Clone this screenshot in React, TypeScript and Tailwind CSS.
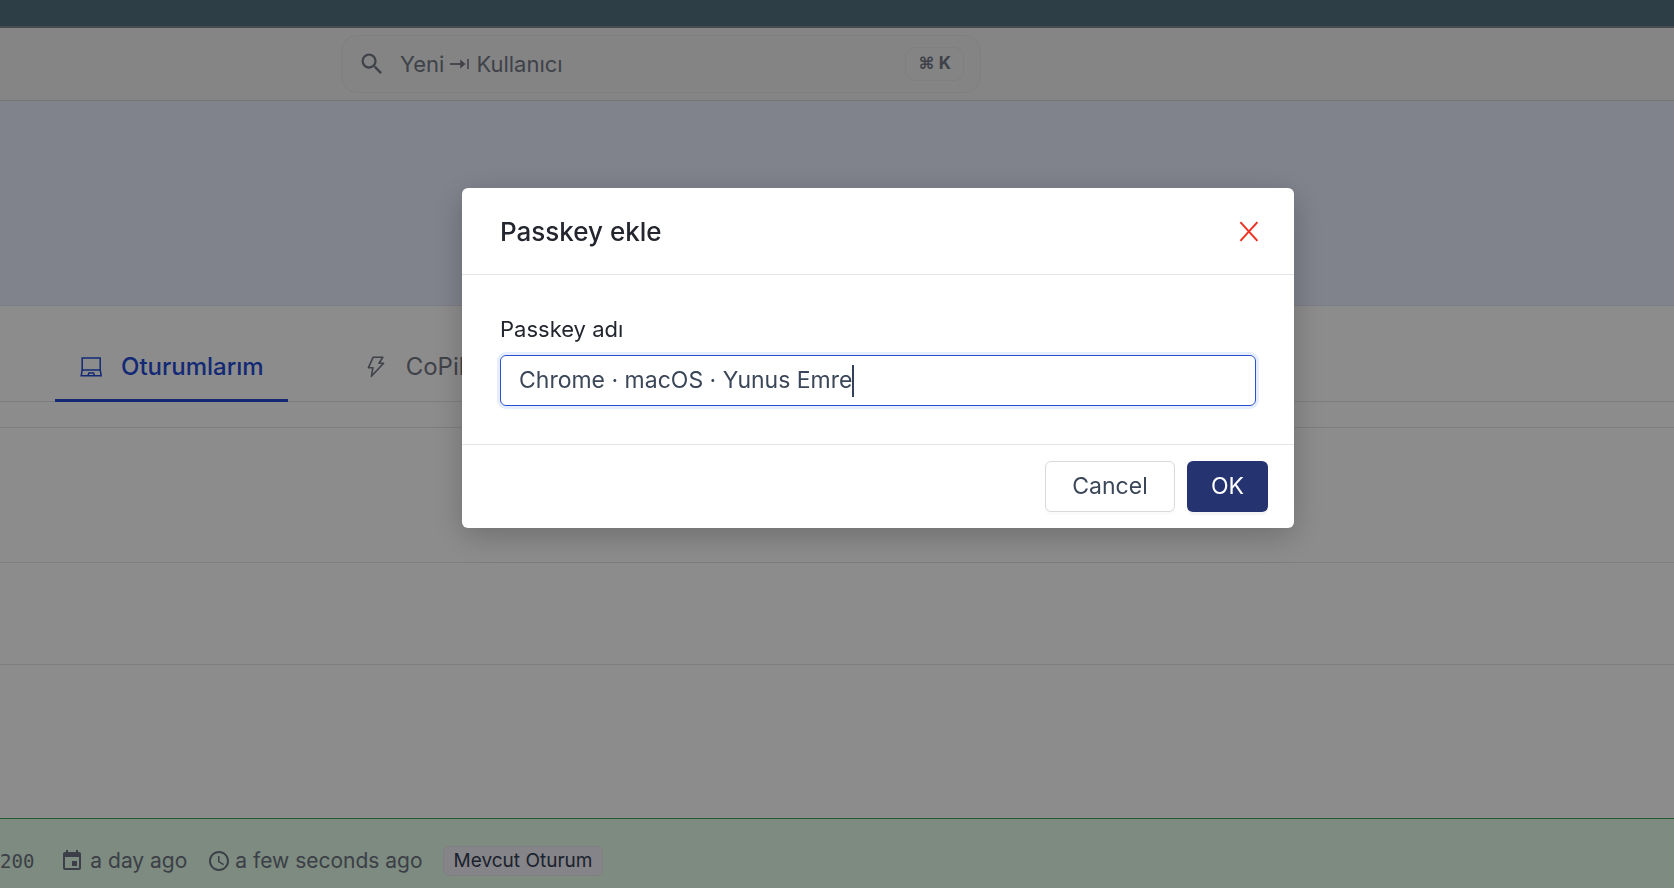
import { useState } from "react";
import { MdEvent, MdOutlineAccessTime, MdSearch } from "react-icons/md";

const LaptopIcon = () => (
  <svg className="w-6 h-6" viewBox="0 0 24 24" fill="none" stroke="currentColor" strokeWidth="1.5">
    <path d="M3.2 15V3h18v12" />
    <path d="M3.2 15h18l1 5.8H2.2z" />
    <path d="M9 20.6l.8-2.6h4.8l.8 2.6" />
  </svg>
);

const BoltIcon = () => (
  <svg className="w-6 h-6" viewBox="0 0 24 24" fill="none" stroke="currentColor" strokeWidth="1.6" strokeLinejoin="round">
    <path d="M9.2 2.2h9.6l-3.8 6h4.6L7.4 21.3l1.5-8.6H4.4z" />
  </svg>
);

const TabArrowIcon = () => (
  <svg className="w-5 h-5" viewBox="0 0 20 20" aria-hidden="true">
    <path d="M0 10h12" stroke="currentColor" strokeWidth="1.8" />
    <path d="M10.2 5.6l5.4 4.4-5.4 4.4z" fill="currentColor" />
    <path d="M18 5v10" stroke="currentColor" strokeWidth="1.6" />
  </svg>
);

const SearchBar = () => (
  <header className="h-[73px] px-[341px] flex items-center bg-[#f2f3f5] border-b border-[#d8d8d8]">
    <button
      type="button"
      className="w-[640px] shrink-0 h-[58px] px-4 flex items-center rounded-2xl border border-[#e5e7ea] bg-[#f0f1f2] text-[#747886]"
    >
      <MdSearch className="w-7 h-7" />
      <span className="ml-3.5 flex-1 flex items-center gap-1.5 text-[22px]">
        Yeni <TabArrowIcon /> Kullanıcı
      </span>
      <kbd className="h-[34px] px-3 flex items-center rounded-[10px] border border-[#e5e7ea] font-[Inter,sans-serif] text-[17px] font-bold">
        ⌘ K
      </kbd>
    </button>
  </header>
);

const Tabs = () => (
  <nav className="h-24 pl-[55px] flex items-stretch gap-14 border-b border-[#e4e4e6] text-2xl">
    <button type="button" className="pt-7 px-6 -mb-px flex items-center gap-[18px] border-b-3 border-[#254cd5] font-medium text-[#254cd5]">
      <LaptopIcon />
      Oturumlarım
    </button>
    <button type="button" className="pt-7 px-5 -mb-px flex items-center gap-[18px] border-b-3 border-transparent text-[#747886]">
      <BoltIcon />
      CoPilot
    </button>
  </nav>
);

const SessionRow = () => (
  <div className="h-[106px] pt-[26px] flex items-start border-t border-[#3ea449] bg-[#e3fde9] text-[21px] text-[#6e7482]">
    <div className="h-8 flex items-center">
      <span className="font-['DejaVu_Sans_Mono',monospace] text-[19px]">200</span>
      <MdEvent className="ml-[26px] mr-1.5 w-6 h-6" />
      <span>a day ago</span>
      <MdOutlineAccessTime className="ml-5 mr-1 w-6 h-6" />
      <span>a few seconds ago</span>
      <span className="ml-5 h-[30px] px-[10px] flex items-center rounded-md border border-[#ebe8ee] bg-[#f2f0f7] text-[19px] text-[#333f55]">
        Mevcut Oturum
      </span>
    </div>
  </div>
);

const PasskeyDialog = () => {
  const [name, setName] = useState("Chrome · macOS · Yunus Emre");

  return (
    <div className="fixed inset-0 pt-47 pl-[82px] flex items-start justify-center bg-black/45">
      <div
        role="dialog"
        aria-labelledby="passkey-title"
        className="w-full max-w-[832px] bg-white rounded-md shadow-[0_8px_32px_rgba(0,0,0,0.22)]"
      >
        <div className="h-[87px] pr-[33px] pl-[38px] flex items-center justify-between border-b border-[#e3e3ea]">
          <h2 id="passkey-title" className="text-[26px] font-medium text-[#23262f]">
            Passkey ekle
          </h2>
          <button type="button" aria-label="Close" className="w-6 h-6 text-[#f03020]">
            <svg className="w-6 h-6" viewBox="0 0 24 24" fill="none" stroke="currentColor" strokeWidth="2">
              <path d="M3.4 3.2l17 18.6M20.4 3.2L3.4 21.8" />
            </svg>
          </button>
        </div>
        <div className="h-[170px] px-[38px] pt-10 border-b border-[#e3e3e8]">
          <label htmlFor="passkey-name" className="block h-10 leading-7 text-[22px] text-[#23262f]">
            Passkey adı
          </label>
          <div className="h-[51px] px-[18px] flex items-center rounded-md border border-[#2850d0] ring-3 ring-[#e6edfd]">
            <input
              id="passkey-name"
              type="text"
              value={name}
              onChange={(e) => setName(e.target.value)}
              className="field-sizing-content text-[23px] text-[#3b4758] outline-none"
            />
            <span className="w-0.5 h-8 bg-[#34415a]" />
          </div>
        </div>
        <div className="py-4 pr-[26px] flex justify-end gap-3 text-[23px]">
          <button type="button" className="w-[130px] h-[51px] rounded-md border border-[#d9d9d9] bg-white text-[#3b4758] shadow-[0_3px_0_rgba(0,0,0,0.02)]">
            Cancel
          </button>
          <button type="button" className="w-[81px] h-[51px] rounded-md bg-[#253471] text-white shadow-[0_3px_0_rgba(0,0,0,0.04)]">
            OK
          </button>
        </div>
      </div>
    </div>
  );
};

const App = () => (
  <div className="h-screen overflow-hidden bg-white font-[Inter,sans-serif]">
    <div className="h-7 bg-[#547181] border-b-2 border-[#7d878e]" />
    <SearchBar />
    <div className="h-[205px] bg-[#e9eeff] border-b border-[#dfe3ee]" />
    <Tabs />
    <section>
      <div className="h-[26px] border-b border-[#e4e4e6]" />
      <div className="h-[135px] border-b border-[#e4e4e6]" />
      <div className="h-[102px] border-b border-[#e4e4e6]" />
      <div className="h-[153px]" />
      <SessionRow />
    </section>
    <PasskeyDialog />
  </div>
);

export default App;
